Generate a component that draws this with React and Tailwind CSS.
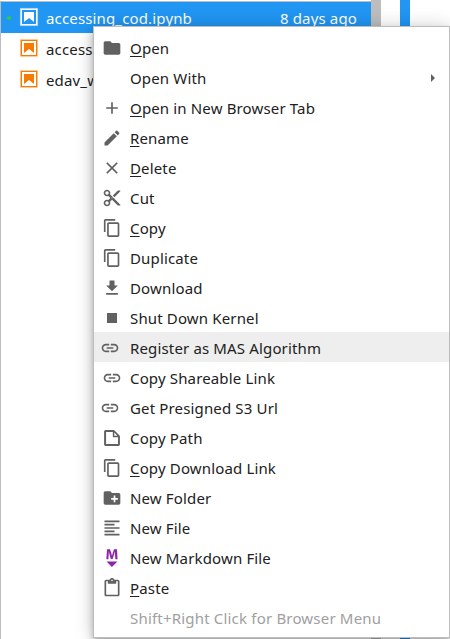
const P = {
  folder: 'M10 4H4c-1.1 0-1.99.9-1.99 2L2 18c0 1.1.9 2 2 2h16c1.1 0 2-.9 2-2V8c0-1.1-.9-2-2-2h-8l-2-2z',
  add: 'M19 13h-6v6h-2v-6H5v-2h6V5h2v6h6v2z',
  edit: 'M3 17.25V21h3.75L17.81 9.94l-3.75-3.75L3 17.25zM20.71 7.04c.39-.39.39-1.02 0-1.41l-2.34-2.34c-.39-.39-1.02-.39-1.41 0l-1.83 1.83 3.75 3.75 1.83-1.83z',
  close: 'M19 6.41L17.59 5 12 10.59 6.41 5 5 6.41 10.59 12 5 17.59 6.41 19 12 13.41 17.59 19 19 17.59 13.41 12z',
  cut: 'M9.64 7.64c.23-.5.36-1.05.36-1.64 0-2.21-1.79-4-4-4S2 3.79 2 6s1.79 4 4 4c.59 0 1.14-.13 1.64-.36L10 12l-2.36 2.36C7.14 14.13 6.59 14 6 14c-2.21 0-4 1.79-4 4s1.79 4 4 4 4-1.79 4-4c0-.59-.13-1.14-.36-1.64L12 14l7 7h3v-1L9.64 7.64zM6 8c-1.1 0-2-.89-2-2s.9-2 2-2 2 .89 2 2-.9 2-2 2zm0 12c-1.1 0-2-.89-2-2s.9-2 2-2 2 .89 2 2-.9 2-2 2zm6-7.5c-.28 0-.5-.22-.5-.5s.22-.5.5-.5.5.22.5.5-.22.5-.5.5zM19 3l-6 6 2 2 7-7V3h-3z',
  copy: 'M11.9,1H3.2C2.4,1,1.7,1.7,1.7,2.5v10.2h1.5V2.5h8.7V1z M14.1,3.9h-8c-0.8,0-1.5,0.7-1.5,1.5v10.2c0,0.8,0.7,1.5,1.5,1.5h8c0.8,0,1.5-0.7,1.5-1.5V5.4C15.5,4.6,14.9,3.9,14.1,3.9z M14.1,15.5h-8V5.4h8V15.5z',
  download: 'M19 9h-4V3H9v6H5l7 7 7-7zM5 18v2h14v-2H5z',
  stop: 'M6 6h12v12H6z',
  link: 'M3.9 12c0-1.71 1.39-3.1 3.1-3.1h4V7H7c-2.76 0-5 2.24-5 5s2.24 5 5 5h4v-1.9H7c-1.71 0-3.1-1.39-3.1-3.1zM8 13h8v-2H8v2zm9-6h-4v1.9h4c1.71 0 3.1 1.39 3.1 3.1s-1.39 3.1-3.1 3.1h-4V17h4c2.76 0 5-2.24 5-5s-2.24-5-5-5z',
  file: 'M19.3 8.2l-5.5-5.5c-.3-.3-.7-.5-1.2-.5H3.9c-.8.1-1.6.9-1.6 1.8v14.1c0 .9.7 1.6 1.6 1.6h14.2c.9 0 1.6-.7 1.6-1.6V9.4c.1-.5-.1-.9-.4-1.2zm-5.8-3.3l3.4 3.6h-3.4V4.9zm3.9 12.7H4.7c-.1 0-.2 0-.2-.2V4.7c0-.2.1-.3.2-.3h7.2v4.4s0 .8.3 1.1c.3.3 1.1.3 1.1.3h4.3v7.2s-.1.2-.2.2z',
  newFolder: 'M20 6h-8l-2-2H4c-1.11 0-1.99.89-1.99 2L2 18c0 1.11.89 2 2 2h16c1.11 0 2-.89 2-2V8c0-1.11-.89-2-2-2zm-1 8h-3v3h-2v-3h-3v-2h3V9h2v3h3v2z',
  text: 'M15 15H3v2h12v-2zm0-8H3v2h12V7zM3 13h18v-2H3v2zm0 8h18v-2H3v2zM3 3v2h18V3H3z',
  markdown: 'M5 14.9h12l-6.1 6zm9.4-6.8c0-1.3-.1-2.9-.1-4.5-.4 1.4-.9 2.9-1.3 4.3l-1.3 4.3h-2L8.5 7.9c-.4-1.3-.7-2.9-1-4.3-.1 1.6-.1 3.2-.2 4.6L7 12.4H4.8l.7-11h3.3L10 5c.4 1.2.7 2.7 1 3.9.3-1.2.7-2.6 1-3.9l1.2-3.7h3.3l.6 11h-2.4l-.3-4.2z',
  paste: 'M19 2h-4.18C14.4.84 13.3 0 12 0c-1.3 0-2.4.84-2.82 2H5c-1.1 0-2 .9-2 2v16c0 1.1.9 2 2 2h14c1.1 0 2-.9 2-2V4c0-1.1-.9-2-2-2zm-7 0c.55 0 1 .45 1 1s-.45 1-1 1-1-.45-1-1 .45-1 1-1zm7 18H5V4h2v3h10V4h2v16z',
};

const BOX = { copy: 18, file: 22, markdown: 22 };

const items = [
  { icon: 'folder', label: 'Open', key: true },
  { label: 'Open With', submenu: true },
  { icon: 'add', label: 'Open in New Browser Tab', key: true },
  { icon: 'edit', label: 'Rename', key: true },
  { icon: 'close', label: 'Delete', key: true },
  { icon: 'cut', label: 'Cut' },
  { icon: 'copy', label: 'Copy', key: true },
  { icon: 'copy', label: 'Duplicate' },
  { icon: 'download', label: 'Download' },
  { icon: 'stop', label: 'Shut Down Kernel' },
  { icon: 'link', label: 'Register as MAS Algorithm', active: true, shift: true },
  { icon: 'link', label: 'Copy Shareable Link' },
  { icon: 'link', label: 'Get Presigned S3 Url', shift: true },
  { icon: 'file', label: 'Copy Path' },
  { icon: 'copy', label: 'Copy Download Link', key: true },
  { icon: 'newFolder', label: 'New Folder' },
  { icon: 'text', label: 'New File' },
  { icon: 'markdown', label: 'New Markdown File' },
  { icon: 'paste', label: 'Paste', key: true },
  { label: 'Shift+Right Click for Browser Menu', disabled: true },
];

function Icon({ name }) {
  const s = BOX[name] || 24;
  return (
    <svg className={`size-5 ${name === 'markdown' ? 'fill-[#8e24aa]' : 'fill-[#616161]'}`} viewBox={`0 0 ${s} ${s}`}>
      <path d={P[name]} />
    </svg>
  );
}

function MenuItem({ item }) {
  return (
    <li className={`flex h-[30px] items-center pl-2 pt-0.5 ${item.active ? 'bg-[#eeeeee]' : ''} ${item.disabled ? 'tracking-[0.19px] text-[#a0a0a0]' : 'text-[#212121]'}`}>
      <span className={`flex w-7 shrink-0 ${item.shift ? '-ml-0.5 mr-0.5' : ''}`}>{item.icon && <Icon name={item.icon} />}</span>
      <span className="grow whitespace-nowrap">
        {item.key ? (
          <>
            <span className="underline decoration-1 underline-offset-2">{item.label[0]}</span>
            {item.label.slice(1)}
          </>
        ) : (
          item.label
        )}
      </span>
      {item.submenu && (
        <svg className="mr-3.5 h-2 w-1 fill-[#616161]" viewBox="0 0 4 8">
          <path d="M0 0l4 4-4 4z" />
        </svg>
      )}
    </li>
  );
}

function FileRow({ name, when, selected }) {
  return (
    <li className={`flex h-[31px] items-center pl-1.5 pr-3.5 ${selected ? 'bg-[#2196f3] text-white' : 'text-[#212121]'}`}>
      <span className={`mr-2 size-1 rounded-full ${selected ? 'bg-[#2ecc40]' : ''}`} />
      <svg className={`mb-0.5 mr-[7px] size-5 ${selected ? 'fill-white' : 'fill-[#f57c00]'}`} viewBox="0 0 22 22">
        <path className={selected ? 'fill-[#90caf9]' : 'fill-[#fde5cc]'} d="M1 1h20v20H1z" />
        <path className={selected ? 'fill-[#2196f3]' : 'fill-white'} d="M3.3 3.3h15.4v15.4H3.3z" />
        <path d="M18.7 3.3v15.4H3.3V3.3h15.4m1.5-1.5H1.8v18.3h18.3l.1-18.3z" />
        <path d="M16.5 16.5l-5.4-4.3-5.6 4.3v-11h11z" />
      </svg>
      <span className="grow">{name}</span>
      <span>{when}</span>
    </li>
  );
}

export default function App() {
  return (
    <div className="relative h-[639px] w-[450px] overflow-hidden bg-white font-['Noto_Sans',sans-serif] text-[15px] leading-5 tracking-[0.15px]">
      <div className="flex h-full">
        <ul className="mt-px w-[371px] border-l border-t border-[#bdbdbd]">
          <FileRow name="accessing_cod.ipynb" when="8 days ago" selected />
          <FileRow name="access" />
          <FileRow name="edav_w" />
        </ul>
        <div className="w-2.5 bg-[#bdbdbd]" />
        <div className="ml-[19px] w-2.5 bg-[#2196f3]" />
      </div>
      <ul className="absolute left-[93px] top-[26px] h-[612px] w-[357px] border border-[#bdbdbd] bg-white py-[5px] shadow-[0_3px_5px_-1px_rgba(0,0,0,0.2),0_6px_10px_0_rgba(0,0,0,0.14),0_1px_18px_0_rgba(0,0,0,0.2)]">
        {items.map((item) => (
          <MenuItem key={item.label} item={item} />
        ))}
      </ul>
    </div>
  );
}
